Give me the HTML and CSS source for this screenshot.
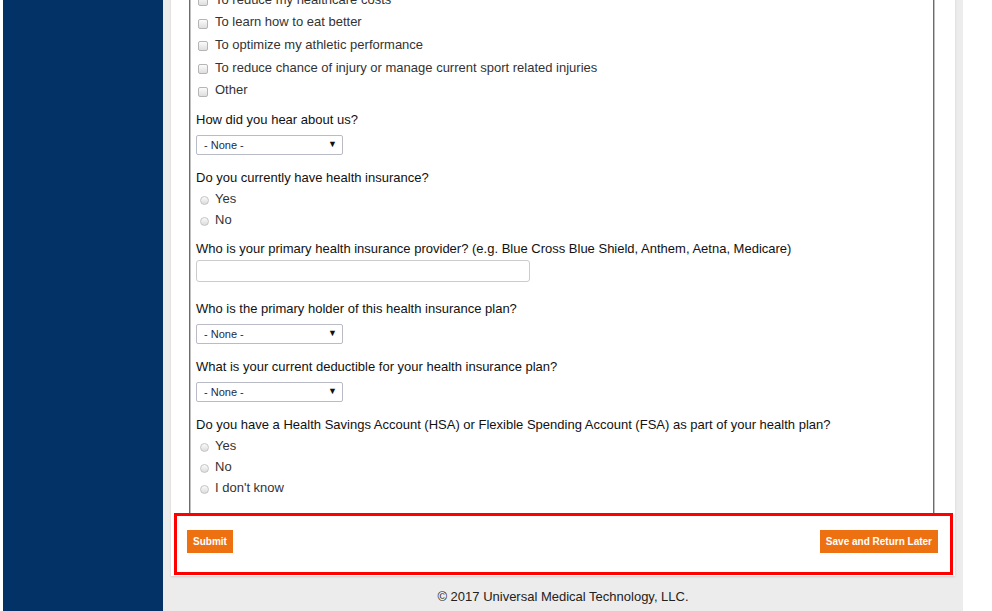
FILE: index.html
```html
<!DOCTYPE html>
<html>

<head>
    <title>Patient Intake</title>

    <link rel="stylesheet" href="styles.css">
</head>

<body>
    <div class="page">
        <div class="sidebar"></div>

        <div class="main">
            <div class="card">
                <fieldset class="group">
                    <div class="checks">
                        <label class="check"><input type="checkbox"> To reduce my healthcare costs</label>
                        <label class="check"><input type="checkbox"> To learn how to eat better</label>
                        <label class="check"><input type="checkbox"> To optimize my athletic performance</label>
                        <label class="check"><input type="checkbox"> To reduce chance of injury or manage current sport related injuries</label>
                        <label class="check"><input type="checkbox"> Other</label>
                    </div>

                    <div class="form-item">
                        <div class="question">How did you hear about us?</div>
                        <div class="select-wrap">
                            <select class="form-select">
                                <option>- None -</option>
                            </select>
                        </div>
                    </div>

                    <div class="form-item">
                        <div class="question">Do you currently have health insurance?</div>
                        <label class="radio"><input type="radio" name="insured"> Yes</label>
                        <label class="radio"><input type="radio" name="insured"> No</label>
                    </div>

                    <div class="form-item">
                        <div class="question">Who is your primary health insurance provider? (e.g. Blue Cross Blue Shield, Anthem, Aetna, Medicare)</div>
                        <input type="text" class="form-text">
                    </div>

                    <div class="form-item">
                        <div class="question">Who is the primary holder of this health insurance plan?</div>
                        <div class="select-wrap">
                            <select class="form-select">
                                <option>- None -</option>
                            </select>
                        </div>
                    </div>

                    <div class="form-item">
                        <div class="question">What is your current deductible for your health insurance plan?</div>
                        <div class="select-wrap">
                            <select class="form-select">
                                <option>- None -</option>
                            </select>
                        </div>
                    </div>

                    <div class="form-item last">
                        <div class="question">Do you have a Health Savings Account (HSA) or Flexible Spending Account (FSA) as part of your health plan?</div>
                        <label class="radio"><input type="radio" name="hsa"> Yes</label>
                        <label class="radio"><input type="radio" name="hsa"> No</label>
                        <label class="radio"><input type="radio" name="hsa"> I don't know</label>
                    </div>
                </fieldset>

                <div class="actions">
                    <button class="btn">Submit</button>
                    <button class="btn">Save and Return Later</button>
                </div>
            </div>

            <div class="footer">© 2017 Universal Medical Technology, LLC.</div>
        </div>
    </div>
</body>

</html>
```

FILE: styles.css
```css
html, body {
    margin: 0;
    background-color: #ffffff;
    font-family: "Liberation Sans", Arial, sans-serif;
    font-size: 13px;
    color: #111;
}

.page {
    display: flex;
    height: 611px;
    padding-left: 3px;
    overflow: hidden;
}

.sidebar {
    width: 160px;
    background-color: #023266;
}

.main {
    width: 800px;
    background-color: #ececec;
    display: flex;
    flex-direction: column;
}

.card {
    margin: -12px 8px 0 8px;
    background-color: #ffffff;
    padding-bottom: 1px;
    box-shadow: 0 1px 2px rgba(0, 0, 0, 0.12);
}

.group {
    margin: 0 20px 0 18px;
    padding: 0 5px 15px 5px;
    border: 2px groove #c0c0c0;
    border-top: 0;
    border-bottom: 0;
}

/* checkbox list */
.check {
    display: flex;
    align-items: center;
    height: 22.6px;
    color: #333;
}

.check input {
    appearance: none;
    width: 10px;
    height: 10px;
    margin: 4px 7px 0 2px;
    border: 1px solid #b5b5b5;
    border-radius: 2px;
    background: linear-gradient(#fbfbfb, #dedede);
}

.form-item {
    margin-top: 11px;
}

.form-item.last {
    margin-top: 13px;
}

.question {
    line-height: 16px;
    margin-bottom: 2px;
}

.radio {
    display: flex;
    align-items: center;
    height: 21px;
    color: #333;
}

.radio input {
    appearance: none;
    width: 9px;
    height: 9px;
    margin: 5px 6px 0 4px;
    border: 1px solid #c4c4c4;
    border-radius: 50%;
    background: linear-gradient(#fbfbfb, #dcdcdc);
}

/* selects */
.select-wrap {
    position: relative;
    width: 147px;
    margin: 7px 0 15px 0;
}

.select-wrap::after {
    content: "\25BC";
    position: absolute;
    right: 6px;
    top: 4px;
    font-size: 9px;
    color: #111;
    pointer-events: none;
}

.form-select {
    appearance: none;
    width: 147px;
    height: 20px;
    padding: 0 0 0 7px;
    border: 1px solid #b9bcc6;
    border-radius: 2px;
    background-color: #ffffff;
    font-family: "Liberation Sans", Arial, sans-serif;
    font-size: 11px;
    color: #1b2a4a;
}

.form-text {
    display: block;
    width: 334px;
    height: 22px;
    box-sizing: border-box;
    margin: 3px 0 19px 0;
    border: 1px solid #cccccc;
    border-radius: 3px;
}

/* bottom buttons */
.actions {
    display: flex;
    justify-content: space-between;
    align-items: flex-start;
    margin: 0 2px 0 3px;
    padding: 14px 12px 19px 10px;
    border: 3px solid #ff0000;
}

.btn {
    border: 0;
    height: 23px;
    padding: 0 6px;
    background-color: #ee7111;
    color: #ffffff;
    font-family: "Liberation Sans", Arial, sans-serif;
    font-size: 10px;
    font-weight: bold;
}

.footer {
    text-align: center;
    padding-top: 13px;
    line-height: 16px;
    color: #222;
}
```
